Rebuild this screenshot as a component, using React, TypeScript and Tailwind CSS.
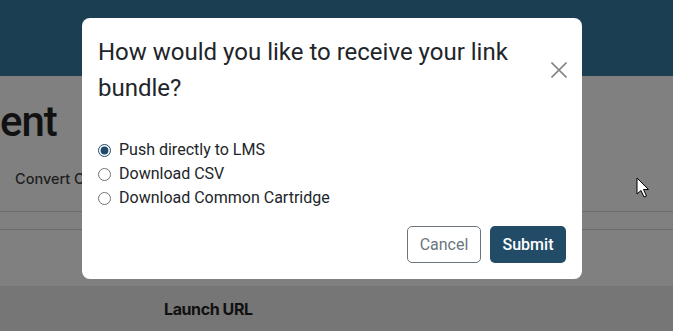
import { useState } from 'react'

const options = [
  { id: 'lms', label: 'Push directly to LMS' },
  { id: 'csv', label: 'Download CSV' },
  { id: 'cc', label: 'Download Common Cartridge' },
]

function Cursor() {
  return (
    <svg
      className="absolute left-[636px] top-[177px]"
      width="14"
      height="22"
      viewBox="0 0 14 22"
    >
      <path
        d="M1 1 L1 17 L5 13.5 L8 20 L10.5 19 L7.5 12.5 L12.5 12.5 Z"
        fill="#fff"
        stroke="#000"
        strokeWidth="1"
        strokeLinejoin="round"
      />
    </svg>
  )
}

export default function App() {
  const [choice, setChoice] = useState('lms')

  return (
    <div className="relative w-[673px] h-[331px] overflow-hidden bg-[#808080] font-['Roboto',sans-serif]">
      {/* page behind the backdrop */}
      <div className="h-[76px] bg-[#1b3e52]" />
      <div className="pt-[22px]">
        <h1 className="text-[42px] leading-[48px] font-medium text-[#111] tracking-tight">ent</h1>
      </div>
      <div className="h-[65px] flex items-center pl-[15px] font-['Inter',sans-serif] text-[14.5px] font-medium text-[#1e1e1e]">
        Convert Canvas
      </div>
      <div className="border-t border-[#6c6c6c] h-[18px]" />
      <div className="border-t border-[#6c6c6c] h-[57px]" />
      <div className="h-[45px] bg-[#767676] flex items-center pl-[164px] font-['Inter',sans-serif] text-[16px] font-bold text-[#111] tracking-tight">
        Launch URL
      </div>

      <Cursor />

      {/* modal */}
      <div className="absolute left-[82px] top-[18px] w-[500px] bg-white rounded-[8px]">
        <div className="flex items-start justify-between px-4 pt-4 pb-4">
          <h5 className="text-[24px] leading-[36px] text-[#212529] w-[430px]">
            How would you like to receive your link bundle?
          </h5>
          <button className="mt-[28px] mr-[-1px] text-[#858585]" aria-label="Close">
            <svg width="16" height="16" viewBox="0 0 16 16" className="block">
              <path d="M0.5 0.5 L15.5 15.5 M15.5 0.5 L0.5 15.5" stroke="currentColor" strokeWidth="1.6" />
            </svg>
          </button>
        </div>
        <div className="px-4 pt-4 pb-4">
          {options.map(o => (
            <label key={o.id} className="flex items-center h-6 text-[16px] text-[#212529]">
              <input
                type="radio"
                name="bundle"
                checked={choice === o.id}
                onChange={() => setChoice(o.id)}
                className="mr-[8px] w-[13px] h-[13px] accent-[#1f4a6a]"
              />
              {o.label}
            </label>
          ))}
        </div>
        <div className="flex justify-end gap-[9px] px-4 pb-4">
          <button className="h-[37px] w-[74px] rounded-[5px] border border-[#6c757d] text-[16px] text-[#6c757d]">
            Cancel
          </button>
          <button className="h-[37px] w-[76px] rounded-[5px] bg-[#224b67] text-[16px] font-medium text-white">
            Submit
          </button>
        </div>
      </div>
    </div>
  )
}
